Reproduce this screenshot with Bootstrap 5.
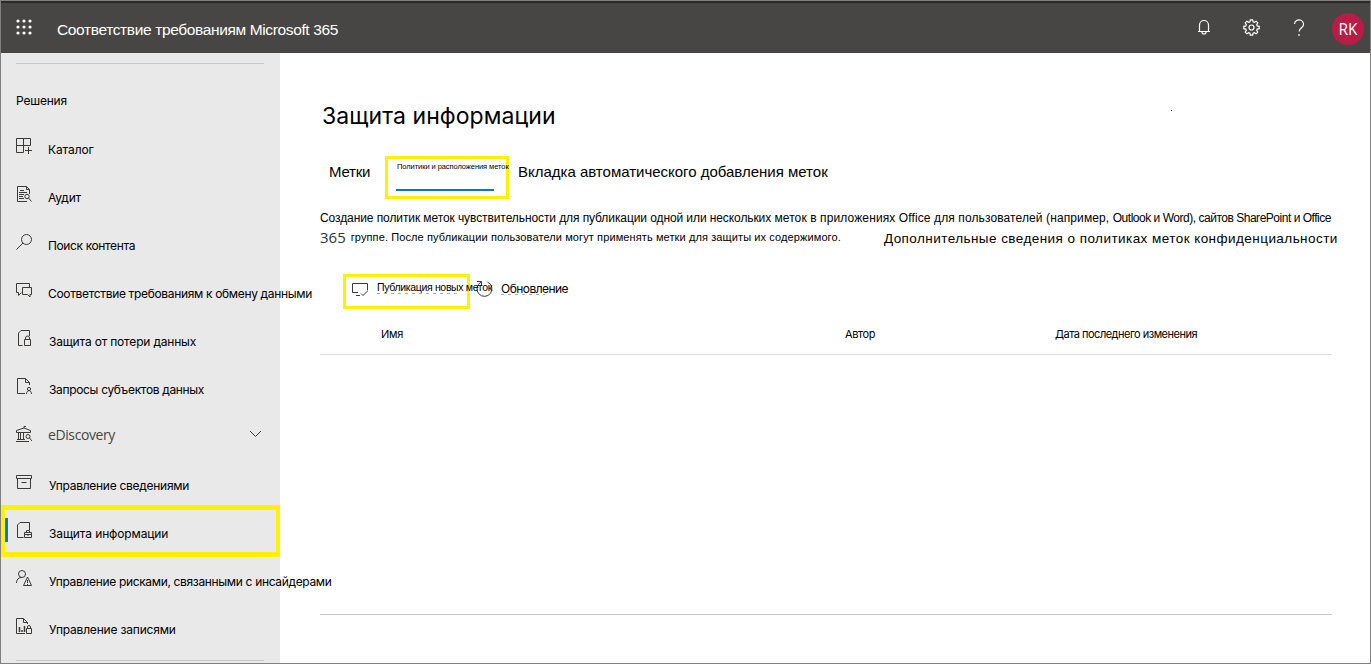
<!DOCTYPE html>
<html lang="ru">
<head>
<meta charset="utf-8">
<meta name="viewport" content="width=device-width, initial-scale=1">
<title>Соответствие требованиям Microsoft 365</title>
<link href="https://cdn.jsdelivr.net/npm/bootstrap@5.3.0/dist/css/bootstrap.min.css" rel="stylesheet">
<style>
body{font-family:"Liberation Sans",Arial,sans-serif;color:#000;background:#fff;font-size:13px;line-height:16px}
.shell{height:664px;border:1px solid #808080;overflow:hidden}
.cap{white-space:nowrap}
svg{display:block;flex:none}
.ln{fill:none;stroke:#3b3a39;stroke-width:1}
/* top bar */
.topbar{height:52px;background:#484644;border-top:2px solid #2b2a29;color:#fff}
.topbar .ln{stroke:#fff;stroke-width:1.2}
.waffle{margin:0 25px 3px 15px;fill:#fff}
.brand{font-size:15.5px;letter-spacing:-.366px;padding-top:3px}
.tools{padding:0 6px 1px 0}
.tools .bell{margin:0 31px 2px 0}
.tools .gear{margin-right:31px}
.tools .ask{margin-right:25px}
.avatar{width:32px;height:32px;background:#b91c47;font:15.5px/33px "Open Sans",sans-serif;margin-top:3px}
/* side navigation */
.side{width:279px;background:#e9e9e9;font-family:Inter,"Liberation Sans",sans-serif;font-size:12px;z-index:1}
.side hr{margin:10px 16px 0 15px;border:0;opacity:1;height:1px;background:#c8c8c8}
.group-name{padding:29px 0 0 15px;height:58px;letter-spacing:-.188px}
.side .nav-link{height:48px;padding:0 15px;color:#000;gap:16px}
.side .nav-link .cap{padding-top:8px}
.side .low .cap{margin-left:1px}
.s1{letter-spacing:-.12px}.s2{letter-spacing:-.19px}.s3{letter-spacing:-.28px}.s4{letter-spacing:-.335px}.s5{letter-spacing:-.377px}
.side .edisc .cap{font:14px/18px "Open Sans",sans-serif;letter-spacing:-.395px;color:#484644;padding-top:2px}
.side .edisc .chev{margin-right:3px}
.side .current{height:52px;margin:-1px 0 -3px;border:solid #fff100;border-width:5px 4px;padding:0 11px 2px 0;gap:0}
.side .current .bar{width:3px;height:24px;background:#0078d4;margin-right:8px}
.side .current .cap{margin-left:17px;padding-top:8px}
/* content */
.work{padding:0 38px 0 39px;width:1090px}
.title{font-family:Inter,sans-serif;font-size:23px;line-height:30px;font-weight:400;letter-spacing:.06px;margin:48px 0 0 3px}
.speck{width:1px;height:1px;background:#333;right:198px;top:109px}
.hot{border:3px solid #fff100}
.tabs{height:43px;margin-top:25px;font-size:15px}
.tab1{margin:8px 0 0 10px;width:42px;letter-spacing:-.22px}
.tabhot{width:124px;height:43px;margin-left:14px}
.tabhot .cap{font-size:7.5px;line-height:10px;padding:3px 0 0 9px;letter-spacing:-.07px}
.tabhot .under{width:98px;height:2px;background:#0078d4;margin:17px 0 0 8px}
.tab3{margin:8px 0 0 9px;letter-spacing:-.01px}
.para{margin-top:11px;height:42px;font-size:12px;padding-left:1px}
.p1{letter-spacing:-.09px}.p2{letter-spacing:.11px}.p3{letter-spacing:-.48px}
.num{font:15px/20px "Open Sans",sans-serif;width:26px;color:#333;margin-top:1px}
.p4{font-size:11px;line-height:20px;letter-spacing:.106px;margin:1px 0 0 5px;width:491px}
.more{font-size:13.5px;line-height:20px;letter-spacing:.442px;margin:3px 0 0 43px;color:#000;text-decoration:none}
.cmds{margin:22px 0 0 24px}
.btnhot{width:127px;height:35px}
.btnhot .mon{margin:5px 9px 0 6px}
.pub{font-size:10.5px;letter-spacing:-.335px;margin-top:2px;height:16px;z-index:1}
.refresh{margin:6px 0 0 6px}
.upd{margin:7px 0 0 8px;font-family:Inter,sans-serif;font-size:12px;letter-spacing:-.545px}
.residue{background:repeating-linear-gradient(90deg,#aaa 0 3px,transparent 3px 7px) 0 14px/82px 1px no-repeat}
.upd.residue{background-size:44px 1px;background-position:0 13px}
.cols{height:38px;margin:8px 0 0 1px;padding:9px 0 0 61px;border-bottom:1px solid #e1e1e1;font:11px/16px Inter,sans-serif}
.c1{width:464px;letter-spacing:-.286px}.c2{width:210px;letter-spacing:-.416px}.c3{letter-spacing:-.506px}
.endline{margin:259px 0 0 1px;height:1px;background:#c8c8c8}
</style>
</head>
<body>
<div class="shell d-flex flex-column position-relative">
<header class="topbar d-flex align-items-center flex-shrink-0">
 <svg class="waffle" width="16" height="16"><g id="r"><circle cx="2" cy="2" r="1.6"/><circle cx="8" cy="2" r="1.6"/><circle cx="14" cy="2" r="1.6"/></g><use href="#r" y="6"/><use href="#r" y="12"/></svg>
 <div class="brand cap">Соответствие требованиям Microsoft 365</div>
 <div class="tools ms-auto d-flex align-items-center">
  <svg class="ln bell" width="16" height="16"><path d="M3.500 12V6a4.500 4.500 0 0 1 9 0v6M2 12.500h12M6 13a2 2 0 0 0 4 0"/></svg>
  <svg class="ln gear" width="17" height="17" viewBox="0 0 17 17"><circle cx="8.500" cy="8.500" r="2.500"/><path d="M7.300.800h2.400l.4 2 1.300.5 1.700-1.100 1.700 1.700-1.100 1.700.5 1.300 2 .4v2.400l-2 .4-.5 1.300 1.100 1.700-1.700 1.700-1.700-1.100-1.300.5-.4 2H7.300l-.4-2-1.300-.5-1.700 1.100-1.700-1.700 1.100-1.700-.5-1.300-2-.4V7.300l2-.4.5-1.300-1.100-1.700 1.700-1.700 1.700 1.100 1.300-.5z"/></svg>
  <svg class="ln ask" width="16" height="18"><path d="M3.500 5a4.500 4.200 0 1 1 7.500 3.200C9 9.800 8 10.500 8 12.500M8 15v2"/></svg>
  <div class="avatar rounded-circle text-center">RK</div>
 </div>
</header>
<div class="d-flex flex-grow-1">
<nav class="side flex-shrink-0">
 <hr>
 <div class="group-name cap">Решения</div>
 <div class="nav flex-column flex-nowrap">
  <a class="nav-link d-flex align-items-center"><svg class="ln" width="16" height="16"><path d="M.5.500h14v7H.5zM7.500.500v14h-7v-14M12.500 9v7M9 12.500h7"/></svg><div class="cap s1">Каталог</div></a>
  <a class="nav-link d-flex align-items-center"><svg class="ln" width="16" height="16"><path d="M13.500 8V3.500l-3-3h-9v15H11M10.500.500v3h3M4 4.500h4M3 6.500h8M3 8.500h5M3 10.500h4M3 12.500h5"/><circle cx="11" cy="10.500" r="2.200"/><path d="M12.500 12l3 3.500"/></svg><div class="cap s2">Аудит</div></a>
  <a class="nav-link d-flex align-items-center"><svg class="ln" width="16" height="16"><circle cx="10.500" cy="5.500" r="5"/><path d="M7 9l-6.600 6.600"/></svg><div class="cap s5">Поиск контента</div></a>
  <a class="nav-link d-flex align-items-center"><svg class="ln" width="16" height="16"><path d="M13.500 5V1.500H.5v9h2v3l3-3M6.500 5.500h9v7h-1.500v2.500l-2.500-2.500h-5z"/></svg><div class="cap s4">Соответствие требованиям к обмену данными</div></a>
  <a class="nav-link low d-flex align-items-center"><svg class="ln" width="16" height="16"><path d="M13.500 6V.5H5L2.500 3v12.500h4M8.500 9.500h6v6h-6zM9.500 9.500V8a2 2 0 0 1 4 0v1.500"/></svg><div class="cap s2">Защита от потери данных</div></a>
  <a class="nav-link low d-flex align-items-center"><svg class="ln" width="16" height="16"><path d="M13.500 7V4.500l-4-4h-8v15H9M9.500.500v4h4"/><circle cx="13" cy="11" r="1.600"/><path d="M10.500 16c0-4.500 5-4.500 5 0"/></svg><div class="cap s4">Запросы субъектов данных</div></a>
  <a class="nav-link edisc d-flex align-items-center"><svg class="ln" width="16" height="16"><path d="M.5 6.500v-2L8 2l6.500 2.500v2zM8 2V.5h2M2.500 7v6M4.500 7v6M7.500 7v6M1 13.500h8M0 15.500h13"/><circle cx="12" cy="10.500" r="2"/><path d="M13.500 12l2.500 3"/></svg><div class="cap">eDiscovery</div><svg class="ln ms-auto chev" width="13" height="8"><path d="M1 1l5.500 5.500L12 1"/></svg></a>
  <a class="nav-link low d-flex align-items-center"><svg class="ln" width="16" height="16"><path d="M.5 1.500h15v3H.5zM1.500 4.500v10h13v-10M5.500 8.500h5"/></svg><div class="cap s3">Управление сведениями</div></a>
  <a class="nav-link current d-flex align-items-center"><div class="bar"></div><svg class="ln" width="16" height="16"><path d="M13.500 8V.5H4L1.500 3v12.500h6M8.500 10.500h7v5h-7zM10.500 10V8.500h3V10M8 12.500h8M12 12v2"/></svg><div class="cap s1">Защита информации</div></a>
  <a class="nav-link low d-flex align-items-center"><svg class="ln" width="16" height="16"><circle cx="6" cy="4" r="3.500"/><path d="M.5 13c0-3.500 2-5.500 5-5.500M11.500 7l-4 8.500h8zM11.500 10v3M11.500 14v1"/></svg><div class="cap s4">Управление рисками, связанными с инсайдерами</div></a>
  <a class="nav-link low d-flex align-items-center"><svg class="ln" width="16" height="16"><path d="M11.500 6V4.500l-4-4h-7v15H9M7.500.500v4h4M10.500 10.500h5v5h-5zM11.500 10V9a1.500 1.500 0 0 1 3 0v1"/><path d="M3.500 9v5M6 12v2M8.500 8v6" stroke-width="1.500"/></svg><div class="cap s2">Управление записями</div></a>
 </div>
 <hr>
</nav>
<main class="work">
 <h1 class="title cap">Защита информации</h1>
 <div class="tabs d-flex">
  <div class="cap tab1">Метки</div>
  <div class="tabhot hot flex-shrink-0"><div class="cap">Политики и расположения меток</div><div class="under"></div></div>
  <div class="cap tab3">Вкладка автоматического добавления меток</div>
 </div>
 <div class="para">
  <div class="cap"><span class="p1">Создание политик меток чувствительности для публикации одной или нескольких </span><span class="p2">меток в приложениях Office для пользователей (например, </span><span class="p3">Outlook и Word), сайтов SharePoint и Office</span></div>
  <div class="d-flex"><span class="cap num">365</span><span class="cap p4">группе. После публикации пользователи могут применять метки для защиты их содержимого.</span><a class="cap more">Дополнительные сведения о политиках меток конфиденциальности</a></div>
 </div>
 <div class="cmds d-flex">
  <div class="btnhot hot d-flex"><svg class="ln mon" width="16" height="15"><path d="M6 10.500H.5v-9h15v7M4 13.500h4M9 11.500l2 2 4.500-4.500"/></svg><div class="cap pub residue">Публикация новых меток</div></div>
  <svg class="ln refresh" width="17" height="18"><path d="M11.500 2a7.500 7.500 0 1 1-6.500.2M1 1.500h4.500V6"/></svg>
  <div class="cap upd residue">Обновление</div>
 </div>
 <div class="cols d-flex"><div class="c1">Имя</div><div class="c2">Автор</div><div class="c3 cap">Дата последнего изменения</div></div>
 <div class="endline"></div>
</main>
</div>
<div class="speck position-absolute"></div>
</div>
<script src="https://cdn.jsdelivr.net/npm/bootstrap@5.3.0/dist/js/bootstrap.bundle.min.js"></script>
</body>
</html>
